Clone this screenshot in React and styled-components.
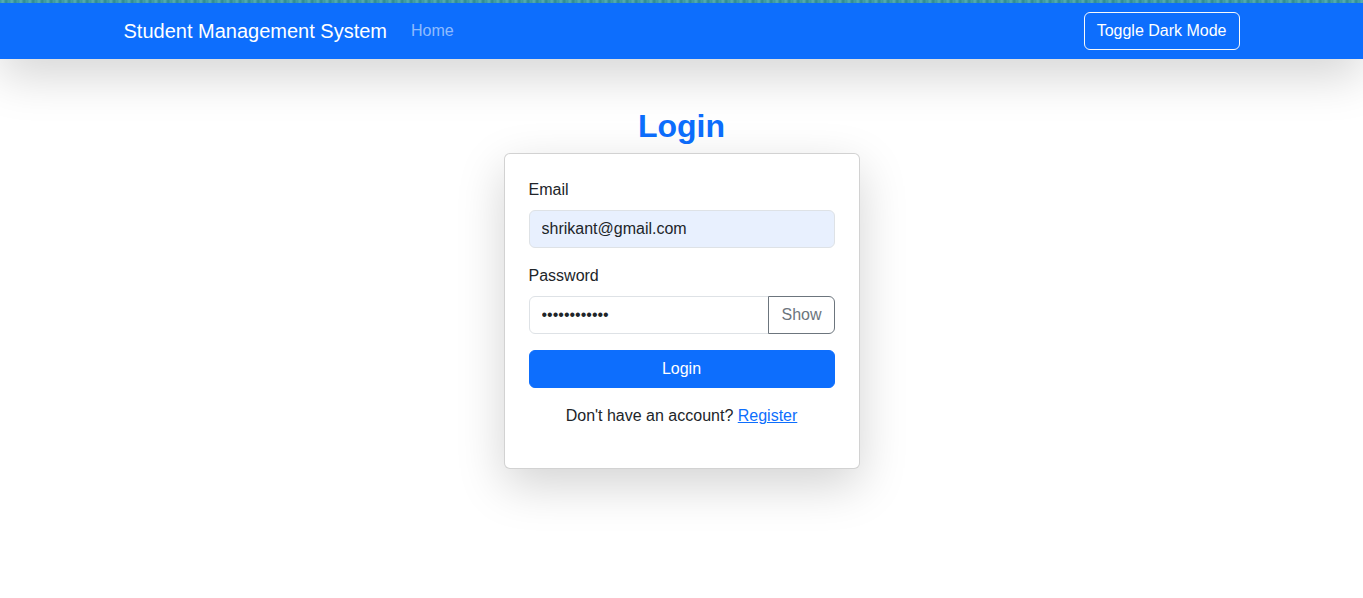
import React from "react";
import styled, { createGlobalStyle } from "styled-components";

const GlobalStyle = createGlobalStyle`
  * {
    box-sizing: border-box;
  }
  html, body {
    min-height: 100%;
  }
  body {
    margin: 0;
    min-height: 100vh;
    background: #fff;
    color: #212529;
    font-family: "Liberation Sans", "Noto Sans", sans-serif;
    font-size: 16px;
    line-height: 1.5;
  }
`;

const Page = styled.div`
  min-height: 100vh;
`;

const TopStrip = styled.div`
  height: 3px;
  background: repeating-linear-gradient(
    90deg,
    #3a9ea6 0px,
    #5bb5b8 3px,
    #2f8f98 6px,
    #4aa8ad 9px
  );
`;

const NavBar = styled.nav`
  background-color: #0d6efd;
  height: 56px;
  box-shadow: 0 1rem 3rem rgba(0, 0, 0, 0.175);
  position: relative;
`;

const NavContainer = styled.div`
  width: 1140px;
  margin: 0 auto;
  padding: 0 12px;
  height: 100%;
  display: flex;
  align-items: center;
`;

const Brand = styled.a`
  font-size: 20px;
  color: #fff;
  text-decoration: none;
  margin-right: 16px;
  padding: 5px 0;
`;

const NavLink = styled.a`
  color: rgba(255, 255, 255, 0.55);
  text-decoration: none;
  padding: 8px;
`;

const ToggleButton = styled.button`
  margin-left: auto;
  font: inherit;
  font-size: 16px;
  color: #fff;
  background: transparent;
  border: 1px solid #f8f9fa;
  border-radius: 6px;
  padding: 6px 12px;
  line-height: 1.5;
  cursor: pointer;
`;

const Main = styled.main`
  display: flex;
  flex-direction: column;
  align-items: center;
  padding-top: 48px;
  padding-bottom: 80px;
`;

const Heading = styled.h2`
  margin: 0 0 8px;
  font-size: 32px;
  font-weight: 700;
  line-height: 1.2;
  color: #0d6efd;
`;

const Card = styled.div`
  width: 356px;
  background: #fff;
  border: 1px solid rgba(0, 0, 0, 0.175);
  border-radius: 6px;
  box-shadow: 0 1rem 3rem rgba(0, 0, 0, 0.175);
  padding: 24px;
`;

const Field = styled.div`
  margin-bottom: 16px;
`;

const Label = styled.label`
  display: block;
  margin-bottom: 8px;
`;

const Input = styled.input`
  display: block;
  width: 100%;
  font: inherit;
  font-size: 16px;
  line-height: 1.5;
  color: #212529;
  padding: 6px 12px;
  height: 38px;
  border: 1px solid #dee2e6;
  border-radius: ${(p) => (p.$grouped ? "6px 0 0 6px" : "6px")};
  background-color: ${(p) => (p.$autofilled ? "#e8f0fe" : "#fff")};
  outline: none;
  min-width: 0;
`;

const InputGroup = styled.div`
  display: flex;
`;

const ShowButton = styled.button`
  font: inherit;
  font-size: 16px;
  color: #6c757d;
  background: transparent;
  border: 1px solid #6c757d;
  border-radius: 0 6px 6px 0;
  padding: 6px 12px;
  margin-left: -1px;
  height: 38px;
  cursor: pointer;
`;

const SubmitButton = styled.button`
  display: block;
  width: 100%;
  height: 38px;
  font: inherit;
  font-size: 16px;
  color: #fff;
  background-color: #0d6efd;
  border: 1px solid #0d6efd;
  border-radius: 6px;
  cursor: pointer;
`;

const Footnote = styled.p`
  margin: 16px 0 16px;
  text-align: center;
`;

const Link = styled.a`
  color: #0d6efd;
  text-decoration: underline;
`;

export default function App() {
  return (
    <Page>
      <GlobalStyle />
      <TopStrip />
      <NavBar>
        <NavContainer>
          <Brand href="#">Student Management System</Brand>
          <NavLink href="#">Home</NavLink>
          <ToggleButton>Toggle Dark Mode</ToggleButton>
        </NavContainer>
      </NavBar>
      <Main>
        <Heading>Login</Heading>
        <Card>
          <Field>
            <Label>Email</Label>
            <Input type="email" defaultValue="shrikant@gmail.com" $autofilled />
          </Field>
          <Field>
            <Label>Password</Label>
            <InputGroup>
              <Input type="password" defaultValue="shrikant1234" $grouped />
              <ShowButton>Show</ShowButton>
            </InputGroup>
          </Field>
          <SubmitButton>Login</SubmitButton>
          <Footnote>
            Don't have an account? <Link href="#">Register</Link>
          </Footnote>
        </Card>
      </Main>
    </Page>
  );
}
